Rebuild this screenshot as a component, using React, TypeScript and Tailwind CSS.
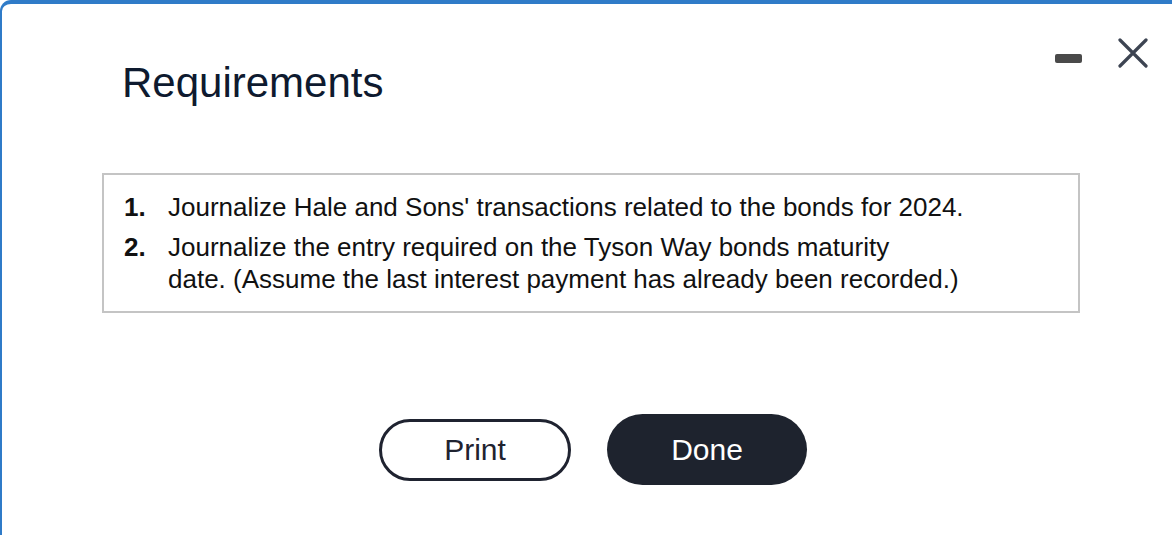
const items = [
  ["Journalize Hale and Sons' transactions related to the bonds for 2024."],
  [
    "Journalize the entry required on the Tyson Way bonds maturity",
    "date. (Assume the last interest payment has already been recorded.)",
  ],
]

const CloseIcon = () => (
  <svg width="30" height="30" viewBox="0 0 30 30" className="text-[#3d4452]">
    <path d="M2 2 L28 28 M28 2 L2 28" stroke="currentColor" strokeWidth="3.2" strokeLinecap="round" fill="none" />
  </svg>
)

export default function App() {
  return (
    <div className="h-[535px] w-full overflow-hidden bg-white font-['Liberation_Sans',Arial,sans-serif]">
      <div className="h-[540px] border-l-2 border-t-4 border-[#2f7bc8] rounded-tl-[11px] flex flex-col">
        {/* header */}
        <div className="flex items-start justify-between pl-[120px] pr-[24px]">
          <h1 className="mt-[58px] text-[42px] leading-none text-[#0e1a2f]">Requirements</h1>
          <div className="mt-[34px] flex items-start gap-[36px]">
            <div className="mt-[16px] h-[9px] w-[27px] rounded-[2px] bg-[#4a4a4a]" />
            <CloseIcon />
          </div>
        </div>

        {/* requirements list */}
        <div className="ml-[100px] mt-[69px] w-[978px] border-2 border-[#c4c4c4] pl-[20px] pr-4 pt-[16px] pb-[16px]">
          <ol className="flex flex-col gap-[8px] text-[26px] leading-[32px] text-[#111]">
            {items.map((lines, i) => (
              <li key={i} className="flex">
                <span className="w-[44px] shrink-0 font-bold">{i + 1}.</span>
                <div className="flex flex-col">
                  {lines.map((l) => (
                    <span key={l} className="whitespace-nowrap">{l}</span>
                  ))}
                </div>
              </li>
            ))}
          </ol>
        </div>

        {/* buttons */}
        <div className="ml-[377px] mt-[101px] flex items-center gap-[36px]">
          <button className="h-[62px] w-[192px] rounded-full border-[3px] border-[#1f2330] text-[30px] text-[#1f2330]">
            Print
          </button>
          <button className="h-[71px] w-[200px] rounded-full bg-[#1e232e] text-[30px] text-white">
            Done
          </button>
        </div>
      </div>
    </div>
  )
}
